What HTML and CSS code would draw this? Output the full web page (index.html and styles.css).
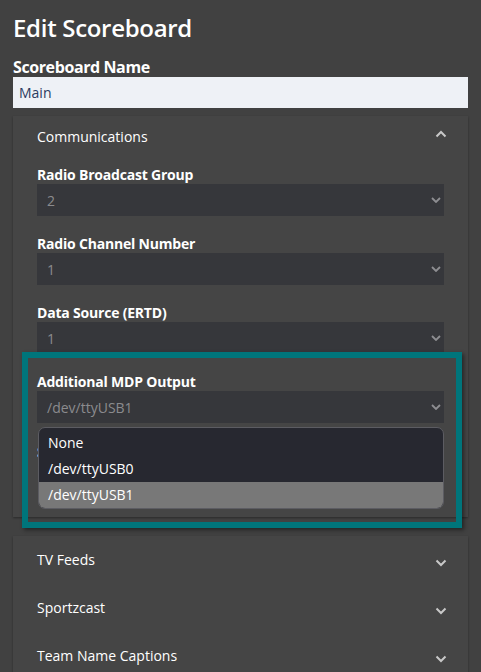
FILE: index.html
```html
<!DOCTYPE html>
<html lang="en">
<head>
  <meta charset="UTF-8">
  <meta name="viewport" content="width=device-width, initial-scale=1.0">
  <title>Edit Scoreboard</title>
  <link rel="stylesheet" href="styles.css">
</head>
<body>
  <div class="page">
    <h1>Edit Scoreboard</h1>
    <label class="name-label" for="name">Scoreboard Name</label>
    <input class="name-input" type="text" id="name" value="Main">

    <div class="panel open">
      <div class="panel-head">
        <span>Communications</span>
        <svg class="chev" width="12" height="8" viewBox="0 0 12 8"><path d="M1.5 6.5 L6 2 L10.5 6.5" fill="none" stroke="#c8c8c8" stroke-width="2"/></svg>
      </div>
      <div class="panel-body">
        <div class="field">
          <div class="field-label">Radio Broadcast Group</div>
          <div class="select"><span>2</span>
            <svg width="10" height="6" viewBox="0 0 10 6"><path d="M1 1 L5 5 L9 1" fill="none" stroke="#8e8e92" stroke-width="1.8"/></svg>
          </div>
        </div>
        <div class="field">
          <div class="field-label">Radio Channel Number</div>
          <div class="select"><span>1</span>
            <svg width="10" height="6" viewBox="0 0 10 6"><path d="M1 1 L5 5 L9 1" fill="none" stroke="#8e8e92" stroke-width="1.8"/></svg>
          </div>
        </div>
        <div class="field">
          <div class="field-label">Data Source (ERTD)</div>
          <div class="select"><span>1</span>
            <svg width="10" height="6" viewBox="0 0 10 6"><path d="M1 1 L5 5 L9 1" fill="none" stroke="#8e8e92" stroke-width="1.8"/></svg>
          </div>
        </div>
        <div class="field mdp">
          <div class="field-label">Additional MDP Output</div>
          <div class="select"><span>/dev/ttyUSB1</span>
            <svg width="10" height="6" viewBox="0 0 10 6"><path d="M1 1 L5 5 L9 1" fill="none" stroke="#8e8e92" stroke-width="1.8"/></svg>
          </div>
          <ul class="menu">
            <li>None</li>
            <li>/dev/ttyUSB0</li>
            <li class="active">/dev/ttyUSB1</li>
          </ul>
        </div>
        <div class="field hidden-field">
          <div class="field-label">S</div>
        </div>
      </div>
    </div>

    <div class="panel-list">
      <div class="panel-row">
        <span>TV Feeds</span>
        <svg class="chev" width="12" height="8" viewBox="0 0 12 8"><path d="M1.5 1.5 L6 6 L10.5 1.5" fill="none" stroke="#c8c8c8" stroke-width="2"/></svg>
      </div>
      <div class="panel-row">
        <span>Sportzcast</span>
        <svg class="chev" width="12" height="8" viewBox="0 0 12 8"><path d="M1.5 1.5 L6 6 L10.5 1.5" fill="none" stroke="#c8c8c8" stroke-width="2"/></svg>
      </div>
      <div class="panel-row">
        <span>Team Name Captions</span>
        <svg class="chev" width="12" height="8" viewBox="0 0 12 8"><path d="M1.5 1.5 L6 6 L10.5 1.5" fill="none" stroke="#c8c8c8" stroke-width="2"/></svg>
      </div>
    </div>

    <div class="highlight"></div>
  </div>
</body>
</html>
```

FILE: styles.css
```css
body {
  font-family: "Open Sans", "Noto Sans", sans-serif;
  background-color: #414141;
  color: #ffffff;
  margin: 0;
  padding: 0;
  overflow: hidden;
}
.page {
  position: relative;
  padding: 13px 13px 0;
}
h1 {
  font-size: 24px;
  font-weight: 600;
  line-height: 30px;
  margin: 0 0 15px;
  letter-spacing: -0.3px;
}
.name-label {
  display: block;
  font-size: 16px;
  font-weight: 700;
  line-height: 19px;
  letter-spacing: -0.4px;
}
.name-input {
  display: block;
  box-sizing: border-box;
  width: 100%;
  height: 31px;
  border: none;
  background-color: #eef1f6;
  color: #2b3b5f;
  font-family: inherit;
  font-size: 14px;
  padding: 0 6px;
  outline: none;
}
.panel {
  margin-top: 8px;
  background-color: #454545;
  box-shadow: 0 1px 2px rgba(0, 0, 0, 0.35);
}
.panel-head {
  height: 41px;
  display: flex;
  align-items: center;
  justify-content: space-between;
  padding: 0 21px 0 24px;
  font-size: 14px;
}
.panel-head .chev {
  margin-top: -6px;
}
.panel-body {
  padding: 9px 24px 0;
  height: 351px;
  overflow: hidden;
}
.field {
  margin-bottom: 19px;
}
.field.mdp {
  position: relative;
}
.field-label {
  font-size: 14px;
  font-weight: 700;
  line-height: 18px;
  letter-spacing: -0.2px;
}
.hidden-field .field-label {
  padding-top: 1px;
}
.select {
  height: 32px;
  background-color: #36373b;
  display: flex;
  align-items: center;
  justify-content: space-between;
  padding: 0 3px 0 10px;
  font-size: 14px;
  color: #8b8b8e;
}
.menu {
  position: absolute;
  top: calc(100% + 4px);
  left: 1px;
  right: 0;
  margin: 0;
  padding: 2px 0 0;
  list-style: none;
  background-color: #272830;
  border: 1px solid #5c5c62;
  border-radius: 7px;
  overflow: hidden;
  z-index: 2;
}
.menu li {
  height: 26px;
  line-height: 26px;
  padding: 0 9px;
  font-size: 14px;
  color: #ffffff;
}
.menu li.active {
  background-color: #787878;
}
.panel-list {
  margin-top: 19px;
  background-color: #454545;
  box-shadow: 0 1px 2px rgba(0, 0, 0, 0.35);
}
.panel-row {
  height: 48px;
  display: flex;
  align-items: flex-start;
  justify-content: space-between;
  padding: 0 21px 0 24px;
  font-size: 14px;
}
.panel-row span {
  line-height: 20px;
  padding-top: 14px;
}
.panel-row .chev {
  margin-top: 23px;
}
.highlight {
  position: absolute;
  left: 22px;
  top: 352px;
  width: 428px;
  height: 164px;
  border: 6px solid #00757b;
  box-shadow: 2px 2px 4px rgba(0, 0, 0, 0.45);
  pointer-events: none;
}
```
